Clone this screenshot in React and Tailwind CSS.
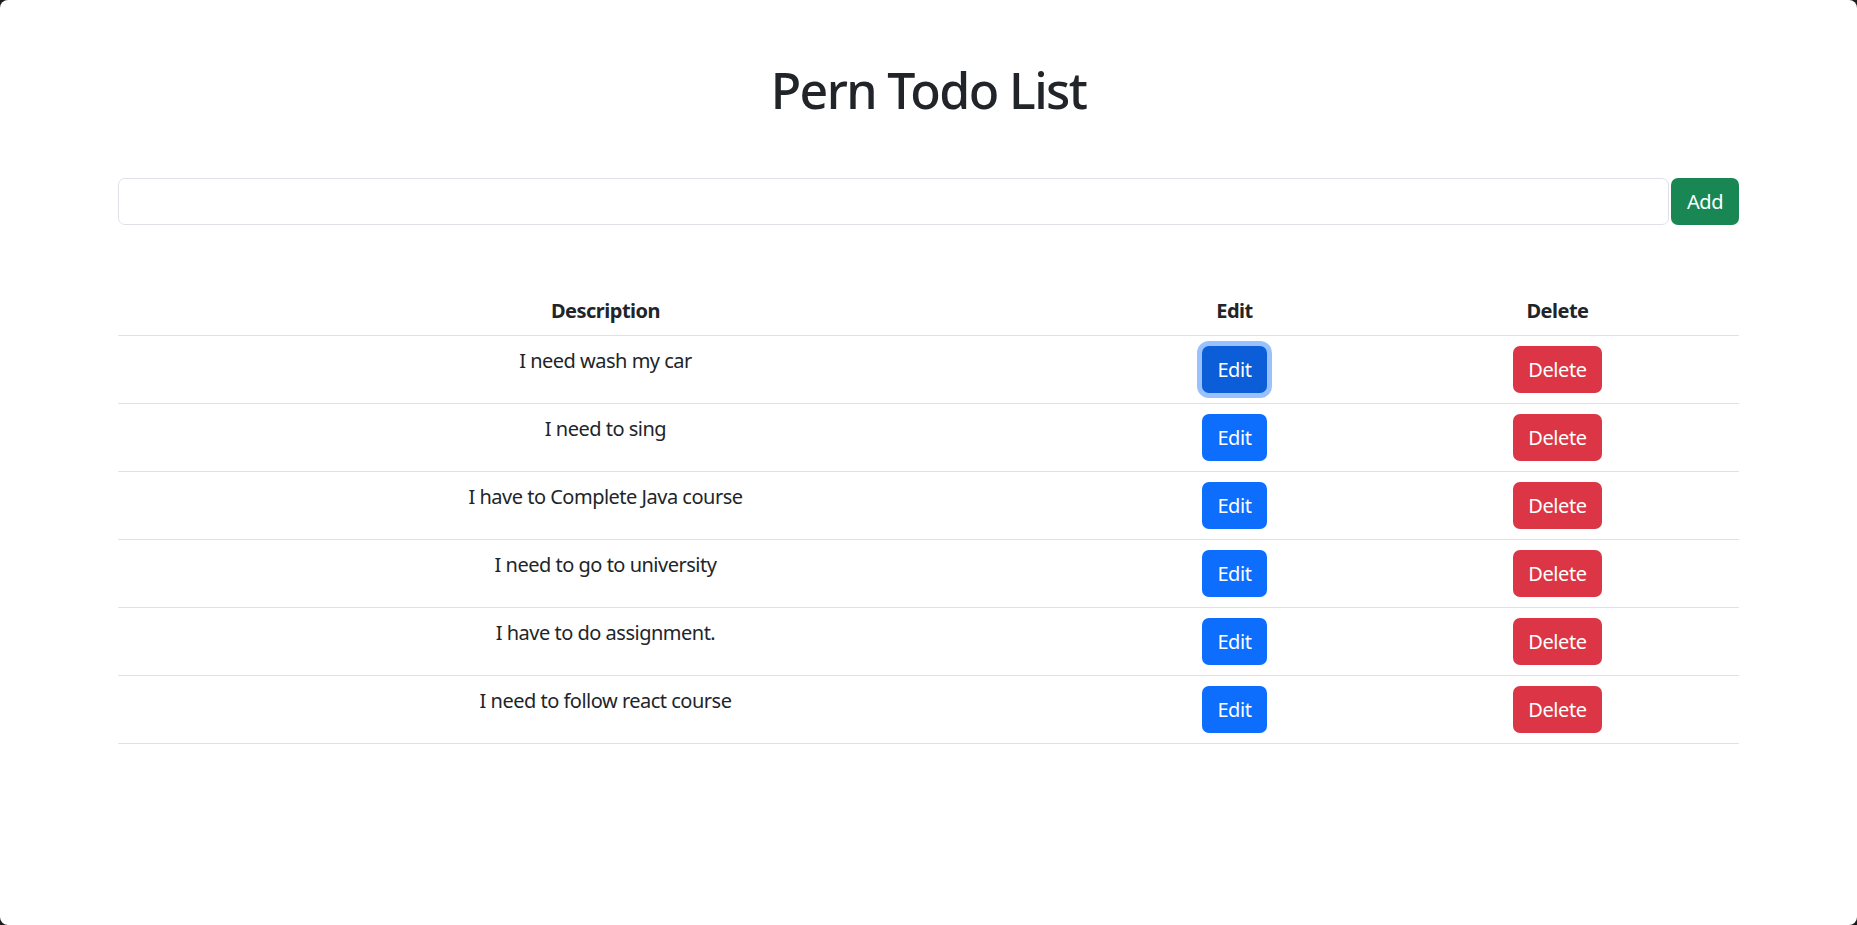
const TODOS = [
  'I need wash my car',
  'I need to sing',
  'I have to Complete Java course',
  'I need to go to university',
  'I have to do assignment.',
  'I need to follow react course',
]

const btn = 'h-[47px] rounded-[7px] px-0 text-[20px] leading-[30px] text-white tracking-[-0.4px]'

export default function App() {
  return (
    <div className="bg-[#1c1c1c] h-[925px] w-[1857px]">
      <div
        className="h-full bg-white rounded-[8px] text-[#212529] overflow-hidden"
        style={{ fontFamily: '"Noto Sans", "Open Sans", sans-serif' }}
      >
        <div className="w-[1621px] mx-auto">
          {/* Заголовок */}
          <h1 className="pt-[60px] text-center text-[50px] leading-[60px] font-medium tracking-[-1.6px]">
            Pern Todo List
          </h1>

          {/* Форма */}
          <form className="flex mt-[58px]" onSubmit={e => e.preventDefault()}>
            <input
              type="text"
              className="flex-1 h-[47px] border border-[#dee2e6] rounded-[7px] px-[15px] text-[20px] outline-none"
            />
            <button className={btn + ' bg-[#198754] w-[68px] ml-[2px]'}>Add</button>
          </form>

          {/* Таблица */}
          <table className="w-full mt-[62px] table-fixed border-collapse tracking-[-0.5px]">
            <colgroup>
              <col className="w-[975px]" />
              <col className="w-[283px]" />
              <col className="w-[363px]" />
            </colgroup>
            <thead>
              <tr className="border-b border-[#dee2e6]">
                <th className="py-[9px] text-[20px] leading-[30px] font-bold">Description</th>
                <th className="py-[9px] text-[20px] leading-[30px] font-bold">Edit</th>
                <th className="py-[9px] text-[20px] leading-[30px] font-bold">Delete</th>
              </tr>
            </thead>
            <tbody>
              {TODOS.map((t, i) => (
                <tr key={i} className="border-b border-[#dee2e6] align-top">
                  <td className="py-[10px] text-center text-[20px] leading-[30px]">{t}</td>
                  <td className="py-[10px] text-center">
                    {i === 0 ? (
                      <button className={btn + ' w-[65px] bg-[#0b5ed7] shadow-[0_0_0_5px_rgba(49,132,253,0.5)]'}>Edit</button>
                    ) : (
                      <button className={btn + ' w-[65px] bg-[#0d6efd]'}>Edit</button>
                    )}
                  </td>
                  <td className="py-[10px] text-center">
                    <button className={btn + ' w-[89px] bg-[#dc3545]'}>Delete</button>
                  </td>
                </tr>
              ))}
            </tbody>
          </table>
        </div>
      </div>
    </div>
  )
}
